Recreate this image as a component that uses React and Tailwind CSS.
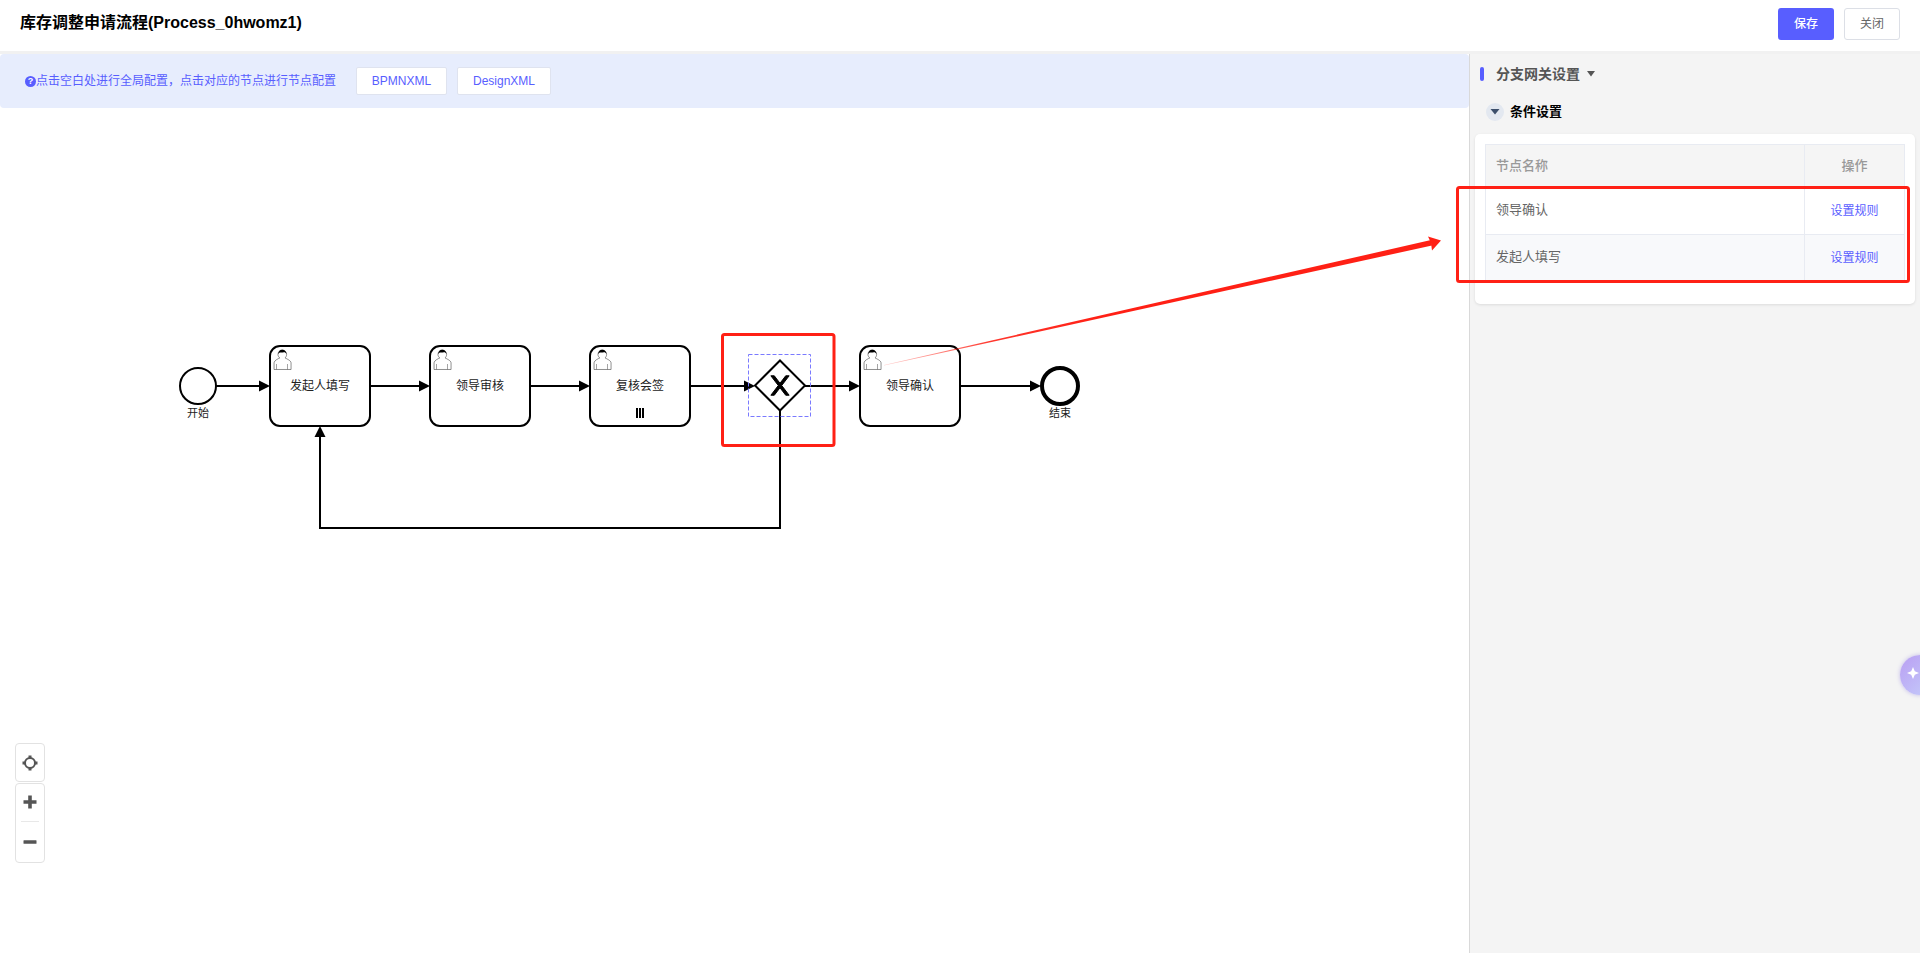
const fontStack = '"Liberation Sans", "Noto Sans CJK SC", sans-serif';

const UserIcon = ({ x, y }) => (
  <g transform={`translate(${x} ${y})`}>
    <path
      d="m 15,12 c 0.909,-0.845 1.594,-2.049 1.594,-3.385 0,-2.554 -1.805,-4.622 -4.357,-4.622 -2.552,0 -4.288,2.068 -4.288,4.622 0,1.348 0.974,2.562 1.896,3.405 -0.529,0.187 -5.669,2.097 -5.794,4.756 v 6.718 h 17 v -6.718 c 0,-2.298 -5.528,-4.595 -6.051,-4.776 z"
      fill="#fff"
      stroke="#444"
      strokeWidth="0.6"
    />
    <path d="m 6.5,18 v 5.5 m 11,0 v -5.5" fill="none" stroke="#666" strokeWidth="0.6" />
    <path d="M 8.2,8.2 c 0,-2.5 1.7,-4.4 4,-4.4 2.4,0 4.4,2 4.4,4.5 -0.7,-1.4 -1.4,-2 -2.6,-2 -1.7,0.3 -3.2,0.3 -4.2,0.1 -0.7,0.3 -1.2,0.9 -1.6,1.8 z" fill="#000" />
  </g>
);

const Task = ({ x, label, multi }) => (
  <g>
    <rect x={x} y="346" width="100" height="80" rx="10" fill="#fff" stroke="#000" strokeWidth="2" />
    <UserIcon x={x} y={346} />
    <text x={x + 50} y="390" textAnchor="middle" fontSize="12" fill="#222">{label}</text>
    {multi && (
      <path d={`M ${x + 47} 408 v 10 M ${x + 50} 408 v 10 M ${x + 53} 408 v 10`} stroke="#000" strokeWidth="2" />
    )}
  </g>
);

const Flow = ({ d }) => <path d={d} fill="none" stroke="#000" strokeWidth="2" />;

const ArrowRight = ({ x }) => <polygon points={`${x},386 ${x - 11},380.5 ${x - 11},391.5`} fill="#000" />;

const Diagram = () => (
  <svg className="absolute left-0 top-0" width="1469" height="899" viewBox="0 54 1469 899" style={{ fontFamily: fontStack }}>
    <Flow d="M 216 386 H 262" />
    <Flow d="M 370 386 H 422" />
    <Flow d="M 530 386 H 582" />
    <Flow d="M 690 386 H 748" />
    <Flow d="M 805 386 H 852" />
    <Flow d="M 960 386 H 1034" />
    <Flow d="M 780 410 V 528 H 320 V 434" />
    <ArrowRight x={270} />
    <ArrowRight x={430} />
    <ArrowRight x={590} />
    <ArrowRight x={755} />
    <ArrowRight x={860} />
    <ArrowRight x={1041} />
    <polygon points="320,426 314.5,437 325.5,437" fill="#000" />

    <circle cx="198" cy="386" r="18" fill="#fff" stroke="#000" strokeWidth="2" />
    <text x="198" y="417" textAnchor="middle" fontSize="11" fill="#222">开始</text>

    <Task x={270} label="发起人填写" />
    <Task x={430} label="领导审核" />
    <Task x={590} label="复核会签" multi />
    <Task x={860} label="领导确认" />

    <rect x="748.5" y="354.5" width="62" height="62" fill="none" stroke="#7a7aff" strokeWidth="1" strokeDasharray="4 2" />
    <polygon points="780,360.5 805,385.5 780,410.5 755,385.5" fill="#fff" stroke="#000" strokeWidth="2" />
    <path
      transform="translate(754.86 360.8)"
      d="m 16,15 7.42857142,9.714285715 -7.42857142,9.714285715 3.428571425,0 5.714285715,-7.464228686 5.714285715,7.464228686 3.428571425,0 -7.42857142,-9.714285715 7.42857142,-9.714285715 -3.428571425,0 -5.714285715,7.464228686 -5.714285715,-7.464228686 z"
      fill="#000"
      stroke="#000"
      strokeWidth="1"
    />

    <circle cx="1060" cy="386" r="18" fill="#fff" stroke="#000" strokeWidth="4" />
    <text x="1060" y="417" textAnchor="middle" fontSize="11" fill="#222">结束</text>
  </svg>
);

const Annotations = () => (
  <svg className="absolute left-0 top-0 pointer-events-none" width="1920" height="953" viewBox="0 0 1920 953">
    <defs>
      <linearGradient id="fadeArrow" x1="884" y1="365" x2="1100" y2="318" gradientUnits="userSpaceOnUse">
        <stop offset="0" stopColor="#ff2015" stopOpacity="0.2" />
        <stop offset="0.5" stopColor="#ff2015" stopOpacity="0.9" />
        <stop offset="1" stopColor="#ff2015" />
      </linearGradient>
    </defs>
    <rect x="722.5" y="334.5" width="111.5" height="111" rx="2" fill="none" stroke="#ff2015" strokeWidth="3" />
    <rect x="1457.5" y="187.5" width="451" height="94" rx="2" fill="none" stroke="#ff2015" strokeWidth="3" />
    <polygon points="884,365 1431,240 1432,245.5 884,365.6" fill="url(#fadeArrow)" />
    <polygon points="1441,240.5 1428,236.5 1431,243 1432,250.5" fill="#ff2015" />
  </svg>
);

const ZoomControls = () => (
  <div className="absolute left-[15px] top-[689px] flex flex-col gap-0">
    <div className="w-[30px] h-[39px] flex items-center justify-center bg-white border border-[#e2e2e2] rounded-sm">
      <svg width="16" height="16" viewBox="0 0 16 16" fill="none" stroke="#555">
        <circle cx="8" cy="8" r="5" strokeWidth="2" />
        <path d="M8 0.5v3M8 12.5v3M0.5 8h3M12.5 8h3" strokeWidth="3" />
      </svg>
    </div>
    <div className="w-[30px] h-[80px] mt-px flex flex-col items-center bg-white border border-[#e2e2e2] rounded-sm">
      <div className="h-[38px] w-[18px] pb-[2px] flex items-center justify-center border-b border-[#e8e8e8]">
        <svg width="14" height="14" viewBox="0 0 14 14" fill="#555">
          <path d="M5.2 0.5h3.6v4.7h4.7v3.6H8.8v4.7H5.2V8.8H0.5V5.2h4.7z" />
        </svg>
      </div>
      <div className="flex-1 flex items-center justify-center">
        <svg width="14" height="14" viewBox="0 0 14 14" fill="#555">
          <rect x="0.5" y="5.2" width="13" height="3.6" rx="0.5" />
        </svg>
      </div>
    </div>
  </div>
);

const TableRow = ({ name, striped }) => (
  <div className={`flex h-[47px] border-t border-[#e8ebf2] ${striped ? 'bg-[#f8f9fb]' : 'bg-white'}`}>
    <div className="flex-1 flex items-center px-[10px] pb-[2px] text-[13px] text-[#666]">{name}</div>
    <div className="w-[100px] flex items-center justify-center border-l border-[#e8ebf2] text-[12px] text-[#5b60ff]">设置规则</div>
  </div>
);

const App = () => (
  <div className="relative h-screen w-full overflow-hidden bg-white" style={{ fontFamily: fontStack }}>
    {/* Header */}
    <div className="h-[54px] flex items-start justify-between border-b-[3px] border-[#f1f1f1] pl-[20px] pr-[20px]">
      <div className="h-[46px] flex items-center text-[16px] font-bold text-black">库存调整申请流程(Process_0hwomz1)</div>
      <div className="flex gap-[10px] pt-[8px]">
        <button className="w-[56px] h-[32px] rounded-[3px] bg-[#585eff] text-white text-[12px] font-medium">保存</button>
        <button className="w-[56px] h-[32px] rounded-[3px] bg-white border border-[#dcdfe6] text-[#666] text-[12px]">关闭</button>
      </div>
    </div>

    <div className="flex h-[899px]">
      {/* Canvas */}
      <div className="relative w-[1469px] bg-white">
        <Diagram />
        <div className="relative h-[54px] flex items-center rounded-[4px] bg-[#e7edfd] pl-[25px]">
          <span className="w-[11px] h-[11px] rounded-full bg-[#585eff] text-white text-[9px] font-bold leading-[11px] text-center">?</span>
          <span className="text-[12px] text-[#585eff] mr-[20px]">点击空白处进行全局配置，点击对应的节点进行节点配置</span>
          <button className="w-[91px] h-[28px] mr-[10px] rounded-[2px] bg-white border border-[#dfe3ef] text-[12px] text-[#585eff]">BPMNXML</button>
          <button className="w-[94px] h-[28px] rounded-[2px] bg-white border border-[#dfe3ef] text-[12px] text-[#585eff]">DesignXML</button>
        </div>
        <ZoomControls />
      </div>

      {/* Settings panel */}
      <div className="flex-1 bg-[#f4f4f4] border-l border-[#d9d9d9] pl-[5px] pr-[5px]">
        <div className="h-[28px] mt-[6px] flex items-center">
          <span className="w-[4px] h-[14px] ml-[5px] rounded-sm bg-[#585eff]"></span>
          <span className="ml-[12px] text-[14px] font-bold text-[#555]">分支网关设置</span>
          <svg className="ml-[6px]" width="10" height="6" viewBox="0 0 10 6" fill="#555"><path d="M1 0h8L5 5.5z" /></svg>
        </div>
        <div className="h-[28px] mt-[10px] flex items-center pl-[11px]">
          <span className="w-[18px] h-[18px] rounded-full bg-[#e3e8f0] flex items-center justify-center">
            <svg width="10" height="6" viewBox="0 0 10 6" fill="#3d4f6b"><path d="M0.5 0h9L5 5.5z" /></svg>
          </span>
          <span className="ml-[6px] text-[13px] font-bold text-black">条件设置</span>
        </div>
        <div className="mt-[8px] h-[170px] rounded-[5px] bg-white p-[10px] shadow-[0_1px_3px_rgba(0,0,0,0.1)]">
          <div className="border border-[#e8ebf2]">
            <div className="flex h-[42px] bg-[#f5f5f5]">
              <div className="flex-1 flex items-center px-[10px] text-[13px] font-medium text-[#999]">节点名称</div>
              <div className="w-[100px] flex items-center justify-center border-l border-[#e8ebf2] text-[13px] font-medium text-[#999]">操作</div>
            </div>
            <TableRow name="领导确认" />
            <TableRow name="发起人填写" striped />
          </div>
        </div>
      </div>
    </div>

    <Annotations />

    {/* Floating assistant button */}
    <div className="absolute left-[1900px] top-[655px] w-[40px] h-[40px] rounded-full bg-gradient-to-br from-[#b99ef2] to-[#c5d0fb] shadow-[0_0_4px_rgba(120,100,220,0.4)]">
      <svg className="absolute left-[4px] top-[9px]" width="20" height="20" viewBox="0 0 20 20" fill="#fff">
        <path d="M9 3 10.8 7.2 15 9 10.8 10.8 9 15 7.2 10.8 3 9 7.2 7.2z" />
        <path d="M18 0 19 3 20 4 19 5 18 8 17 5 16 4 17 3z" />
      </svg>
    </div>
  </div>
);

export default App;
